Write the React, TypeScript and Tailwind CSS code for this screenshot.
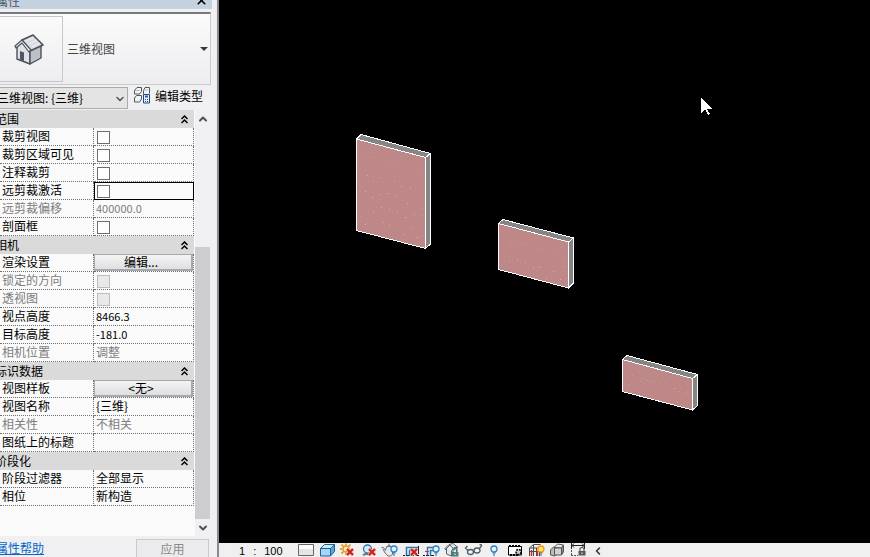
import { type ReactNode } from 'react'
import clsx from 'clsx'
import { ChevronDown, ChevronLeft, ChevronUp, X } from 'lucide-react'

type Property = {
  label: string
  value?: string
  kind: 'text' | 'check' | 'button'
  disabled?: boolean
  focused?: boolean
}

type Group = { title: string; rows: Property[] }

const groups: Group[] = [
  {
    title: '范围',
    rows: [
      { label: '裁剪视图', kind: 'check' },
      { label: '裁剪区域可见', kind: 'check' },
      { label: '注释裁剪', kind: 'check' },
      { label: '远剪裁激活', kind: 'check', focused: true },
      { label: '远剪裁偏移', kind: 'text', value: '400000.0', disabled: true },
      { label: '剖面框', kind: 'check' },
    ],
  },
  {
    title: '相机',
    rows: [
      { label: '渲染设置', kind: 'button', value: '编辑...' },
      { label: '锁定的方向', kind: 'check', disabled: true },
      { label: '透视图', kind: 'check', disabled: true },
      { label: '视点高度', kind: 'text', value: '8466.3' },
      { label: '目标高度', kind: 'text', value: '-181.0' },
      { label: '相机位置', kind: 'text', value: '调整', disabled: true },
    ],
  },
  {
    title: '标识数据',
    rows: [
      { label: '视图样板', kind: 'button', value: '<无>' },
      { label: '视图名称', kind: 'text', value: '{三维}' },
      { label: '相关性', kind: 'text', value: '不相关', disabled: true },
      { label: '图纸上的标题', kind: 'text', value: '' },
    ],
  },
  {
    title: '阶段化',
    rows: [
      { label: '阶段过滤器', kind: 'text', value: '全部显示' },
      { label: '相位', kind: 'text', value: '新构造' },
    ],
  },
]

function PropertyValue({ row }: { row: Property }) {
  if (row.kind === 'check') {
    return (
      <input
        type="checkbox"
        aria-label={row.label}
        disabled={row.disabled}
        className={clsx(
          'block mt-[3px] ml-[3px] w-[13px] h-[13px] appearance-none border',
          row.disabled ? 'border-[#bdbdbd] bg-[#e9e9e9]' : 'border-[#6e6e6e] bg-white checked:bg-[#555]',
        )}
      />
    )
  }
  if (row.kind === 'button') {
    return (
      <button
        type="button"
        aria-label={row.label}
        className="block w-full h-[17px] pr-1 leading-[14px] text-center border border-[#a5a9ae] border-r-2 border-b-2 bg-linear-to-b from-[#f4f4f4] to-[#dedfe1]"
      >
        {row.value}
      </button>
    )
  }
  return (
    <input
      type="text"
      aria-label={row.label}
      defaultValue={row.value}
      disabled={row.disabled}
      className={clsx(
        'block w-full h-4 pl-0.5 bg-transparent outline-none',
        /^[-\d]/.test(row.value ?? '') ? 'text-[11px]' : 'text-xs',
        row.disabled && 'text-[#7d7d7d]',
      )}
    />
  )
}

function PropertyGroup({ group }: { group: Group }) {
  return (
    <tbody>
      <tr className="h-[18px]">
        <th colSpan={2} className="p-0 bg-[#dadada] font-normal text-left">
          <div className="flex items-center justify-between h-[18px] pr-1.5">
            <span className="-ml-[5px] leading-4">{group.title}</span>
            <button type="button" aria-label={`收起 ${group.title}`}>
              <svg width="7" height="9" viewBox="0 0 7 9" fill="none" stroke="#000" strokeWidth="1.5">
                <path d="M.5 4 3.5 1 6.5 4M.5 8 3.5 5 6.5 8" />
              </svg>
            </button>
          </div>
        </th>
      </tr>
      {group.rows.map((row) => (
        <tr key={row.label} className="h-[18px]">
          <td
            className={clsx(
              'p-0 pl-0.5 leading-4 align-top border-r border-b border-dotted border-[#707070]',
              row.disabled && 'text-[#7d7d7d]',
            )}
          >
            {row.label}
          </td>
          <td
            className={clsx(
              'p-0 border-r border-b border-dotted border-[#707070] align-top',
              row.focused && 'outline outline-black -outline-offset-1',
            )}
          >
            <PropertyValue row={row} />
          </td>
        </tr>
      ))}
    </tbody>
  )
}

function HouseIcon() {
  return (
    <svg width="30" height="32" viewBox="0 0 30 32" strokeLinejoin="round">
      <path d="M3 13v13l13 5V17L9 8Z" fill="#dfe2e6" stroke="#4b5058" strokeWidth="1.4" />
      <path d="M16 17v14l11-6V12Z" fill="#bcc1c9" stroke="#4b5058" strokeWidth="1.4" />
      <path d="m8 7 11-5 10 10-13 6Z" fill="#dadde1" stroke="#4b5058" strokeWidth="1.6" />
      <path d="m8 7-7 6 1 2 6-5 7 9 2-2Z" fill="#f5f6f7" stroke="#4b5058" strokeWidth="1.2" />
      <path d="M6 18v8.500l4 1.500v-8.500Z" fill="#4c5565" />
      <path d="m18 14 8-4M15 11l8-4M12 8l7-3" stroke="#f2f3f5" />
    </svg>
  )
}

function EditTypeIcon() {
  return (
    <svg width="17" height="17" viewBox="0 0 17 17" fill="none" stroke="#50565e">
      <path d="M.5 3.500 3 .5h4.500v4l-2 2.500h-5ZM9.500 3.500 11 .5h4.500v6M9.500 3.500V7M.5 11l2-2.500h5V12l-2 3h-5Z" fill="#f5f5f5" />
      <path d="M1 3.500h4.500M9.500 3h4.500" stroke="#b5bac0" />
      <path d="M9.500 7.500h6v8.500h-6Z" fill="#e9f2ff" stroke="#24467c" />
      <path d="M11 9.500h3" stroke="#245ac0" strokeWidth="2" />
      <path d="M11 12.500h1m1 0h1m-3 2h1m1 0h1" stroke="#24467c" />
    </svg>
  )
}

function Cross({ x, y }: { x: number; y: number }) {
  return (
    <g transform={`translate(${x} ${y})`}>
      <path d="m-3-3 6 6m0-6-6 6" stroke="#f4b8b0" strokeWidth="3.500" />
      <path d="m-3-3 6 6m0-6-6 6" stroke="#c8201c" strokeWidth="2" />
    </g>
  )
}

function Bulb({ x, warm }: { x: number; warm?: boolean }) {
  return (
    <g transform={`translate(${x} 0)`}>
      <circle cy="6" r="3" fill={warm ? '#ffe070' : '#e4f5ff'} stroke={warm ? '#ef9a16' : '#2b83c9'} strokeWidth="1.300" />
      <path d="M-1.500 10h3M-1 12h2" stroke={warm ? '#555' : '#1c5f9e'} />
    </g>
  )
}

function Lock({ x, y, color }: { x: number; y: number; color: string }) {
  return (
    <g transform={`translate(${x} ${y})`}>
      <path d="M-2 0v-2.500q2-2 4 0V0" fill="none" stroke={color} strokeWidth="1.200" />
      <path d="M-3.500 0h7v4.500h-7Z" fill={color} />
      <path d="M0 1.500v1.500" stroke="#fff" />
    </g>
  )
}

const CropLines = () => (
  <path d="M5.500 13V4.500H17M8.500 13V7.500H15" fill="none" stroke="#2476b8" strokeWidth="1.500" />
)

const viewTools: { name: string; icon: ReactNode }[] = [
  {
    name: '详细程度',
    icon: (
      <>
        <path d="M2.500 1.500h15v11h-15Z" fill="#fff" stroke="#666" />
        <path d="M3 6h14v6H3Z" fill="#e2e6e6" />
      </>
    ),
  },
  {
    name: '视觉样式',
    icon: (
      <g stroke="#1d6096" strokeLinejoin="round">
        <path d="M3.500 5.500h10v7.500h-10Z" fill="#a5d5f3" />
        <path d="m3.500 5.500 4-4h10l-4 4Z" fill="#cdeafb" />
        <path d="m13.500 5.500 4-4v7l-4 4.500Z" fill="#5ba5d6" />
      </g>
    ),
  },
  {
    name: '日光路径',
    icon: (
      <>
        <path d="M8 .5v2M2 6h2M3.500 1.500l2 2M12.500 1.500l-2 2M3.500 10.500l2-2M8 10v2" stroke="#d98b16" strokeWidth="1.500" />
        <circle cx="8" cy="6" r="3" fill="#fff2b0" stroke="#e59a1d" strokeWidth="1.400" />
        <Cross x={12} y={9} />
      </>
    ),
  },
  {
    name: '阴影',
    icon: (
      <>
        <path d="M4 12q4-2 8 0" fill="none" stroke="#777" strokeWidth="2" />
        <circle cx="8.500" cy="6" r="4" fill="#d5ecfa" stroke="#2c76ac" strokeWidth="1.300" />
        <Cross x={13} y={9} />
      </>
    ),
  },
  {
    name: '渲染对话框',
    icon: (
      <>
        <path d="M1.500 4.500h2l2 3 1-4h6v8l-2 1.500H8L5 10 3 6M7 3.500q2-2 4 0" fill="#e6e8ea" stroke="#6b7178" />
        <path d="M9 .5v2" stroke="#6b7178" />
        <Bulb x={14} />
      </>
    ),
  },
  {
    name: '裁剪视图',
    icon: (
      <>
        <CropLines />
        <path d="M2 12.500h2m1 0h3m2 0h3m2 0h3M17.500 3v8" stroke="#222" />
        <Cross x={13} y={9} />
      </>
    ),
  },
  {
    name: '显示裁剪区域',
    icon: (
      <>
        <CropLines />
        <path d="M1 12.500h2m1 0h3m2 0h3" stroke="#222" />
        <path d="M3 8.500h4" stroke="#c8382c" />
        <Bulb x={14} />
      </>
    ),
  },
  {
    name: '锁定的三维视图',
    icon: (
      <>
        <path d="M3.500 5v6l5 2V8l2-3 3-1v5M1.500 6 6 1.500l4-1 5 4-4 2L7 2 2 7" fill="#e5e8e9" stroke="#596168" />
        <Lock x={12} y={9} color="#47837b" />
      </>
    ),
  },
  {
    name: '临时隐藏/隔离',
    icon: (
      <g fill="#edf6f8" stroke="#4f5c64" strokeWidth="1.300">
        <path d="M3.500 3 1.500 5l3 3M15.500 1.500q2.500 0 2 1.500L15 6" fill="none" />
        <ellipse cx="6.500" cy="9" rx="3" ry="2.500" />
        <ellipse cx="13" cy="7.500" rx="3" ry="2.500" />
      </g>
    ),
  },
  { name: '显示隐藏的图元', icon: <Bulb x={9} /> },
  {
    name: '临时视图属性',
    icon: (
      <>
        <path d="M2.500 3.500h13v8.500h-13Z" fill="#fff" stroke="#000" />
        <path d="M3 3h12M4 12h8" stroke="#000" strokeWidth="2" strokeDasharray="2 1" />
        <circle cx="12.500" cy="9" r="2.500" fill="#ccc" stroke="#000" strokeWidth="1.500" strokeDasharray="2 1" />
      </>
    ),
  },
  {
    name: '显示分析模型',
    icon: (
      <>
        <path d="M2.500 13V5l4-3.500h7M2.500 5h10v8M6.500 2v11M9.500 5v8M3 8.500h9" fill="none" stroke="#4a4a4a" />
        <path d="M4.500 7v6M10.500 8v5" stroke="#c83228" strokeWidth="1.500" />
        <Bulb x={14} warm />
      </>
    ),
  },
  {
    name: '高亮显示位移集',
    icon: (
      <g stroke="#555" strokeLinejoin="round">
        <path d="m2.500 7 3-3 4 1v6l-3 2-4-1Z" fill="#bbb" />
        <path d="m6.500 4 3-3 6 1-2 3-7-.5Z" fill="#e9e9e9" />
        <path d="M6.500 5h7v7h-7Z" fill="#d2d2d2" />
        <path d="m13.500 5 2-3v7l-2 3Z" fill="#888" />
      </g>
    ),
  },
  {
    name: '显示约束',
    icon: (
      <>
        <path d="M2.500 0v6M15.500 0v6M3 2.500h12M5 .5l-2 2 2 2M13 .5l2 2-2 2" fill="none" stroke="#222" />
        <path d="M2.500 7v5M2 12.500h7" stroke="#555" strokeDasharray="2 1" />
        <Lock x={13} y={8} color="#555" />
      </>
    ),
  },
]

function PropertiesPanel() {
  return (
    <aside className="flex flex-col w-[219px] shrink-0 overflow-hidden bg-[#f0f0f2] border-r-2 border-[#8a8b8d]">
      <header className="flex items-center justify-between h-[9px] mr-[5px] pr-1 bg-[#c4d2df] text-[#4b5563]">
        <h1 className="-mt-2 -ml-1 leading-4">属性</h1>
        <button type="button" aria-label="关闭" className="-mt-2 text-black">
          <X size={13} strokeWidth={3} />
        </button>
      </header>

      <button
        type="button"
        className="flex items-center mt-[3px] mr-[6px] h-[73px] shrink-0 text-left border-t-2 border-r border-b border-t-[#77797b] border-[#c9cbce] bg-linear-to-b from-[#fbfbfb] to-[#ededf0]"
      >
        <span className="flex items-center w-[63px] h-[66px] pl-3.5 border-y border-r border-[#c5c8cc]">
          <HouseIcon />
        </span>
        <span className="flex-1 pl-1 text-[#444]">三维视图</span>
        <svg width="8" height="4" viewBox="0 0 8 4" className="mr-0.5" fill="#333a44">
          <path d="M0 0h8L4 4Z" />
        </svg>
      </button>

      <div className="flex items-center h-[25px] shrink-0">
        <div className="relative w-[128px] h-[22px]">
          <select
            aria-label="视图"
            className="w-full h-full appearance-none pl-0 -indent-[3px] bg-[#e4e4e4] border-y border-r border-[#acacac]"
          >
            <option>三维视图: {'{三维}'}</option>
          </select>
          <ChevronDown
            size={12}
            strokeWidth={3}
            className="absolute right-0.5 top-1.5 pointer-events-none text-[#555]"
          />
        </div>
        <button type="button" className="flex items-center gap-1 pl-1.5 pb-1">
          <EditTypeIcon />
          编辑类型
        </button>
      </div>

      <div className="flex flex-1 min-h-0 mr-[7px]">
        <div className="flex-1 overflow-hidden bg-[#fafafa]">
          <table className="w-[194px] table-fixed border-separate border-spacing-0">
            <colgroup>
              <col className="w-[94px]" />
              <col />
            </colgroup>
            {groups.map((group) => (
              <PropertyGroup key={group.title} group={group} />
            ))}
          </table>
        </div>
        <div className="flex flex-col w-[15px] text-[#505050]">
          <button type="button" aria-label="向上滚动" className="flex items-center justify-center h-[17px]">
            <ChevronUp size={12} strokeWidth={4} />
          </button>
          <div className="flex-1" />
          <div className="h-[272px] bg-[#cdcdcf]" />
          <button type="button" aria-label="向下滚动" className="flex items-center justify-center h-[17px]">
            <ChevronDown size={12} strokeWidth={4} />
          </button>
        </div>
      </div>

      <footer className="flex items-end justify-between h-[21px] shrink-0 pr-2">
        <a href="#help" className="-ml-1 leading-[18px] text-[#0066cc] underline">
          属性帮助
        </a>
        <button
          type="button"
          disabled
          className="w-[73px] h-[18px] leading-4 border-t border-x border-[#c9cacc] bg-[#ebebed] text-[#8a8a8a]"
        >
          应用
        </button>
      </footer>
    </aside>
  )
}

type Wall = {
  front: string
  top: string
  side: string
  specks: { color: string; at: number[][] }[]
}

const walls: Wall[] = [
  {
    front: '137.5,139 206.5,157.5 206.5,248.5 137.5,230.5',
    top: '137.5,139 142,134.5 211.5,153.5 206.5,157.5',
    side: '206.5,157.5 211.5,153.5 211.5,244 206.5,248.5',
    specks: [
      {
        color: '#c99a7c',
        at: [
          [144, 154], [148, 156], [151, 157], [155, 157], [159, 158], [163, 160], [169, 161], [174, 162], [178, 164],
          [184, 165], [189, 166], [194, 168], [198, 169], [142, 158], [154, 160], [166, 162], [176, 166], [185, 168],
          [201, 172], [140, 172], [140, 178], [140, 184], [140, 190], [140, 197], [140, 203], [140, 209], [141, 216],
          [141, 221], [203, 187], [203, 194], [203, 201], [203, 208], [203, 215], [203, 222], [203, 228], [203, 235],
          [148, 178], [157, 181], [169, 179], [146, 192], [154, 198], [166, 193], [177, 196], [183, 200], [147, 207],
          [165, 206], [173, 212], [187, 217], [148, 223], [164, 221], [180, 227], [193, 229], [153, 231], [197, 237],
        ],
      },
      {
        color: '#ff9a90',
        at: [
          [148, 175], [154, 181], [160, 177], [175, 181], [191, 187], [146, 191], [153, 197], [161, 194], [169, 193],
          [176, 195], [188, 203], [154, 212], [162, 207], [170, 209], [178, 211], [195, 214], [186, 217], [146, 224],
          [163, 222], [170, 225], [191, 227], [184, 234], [198, 237], [182, 186],
        ],
      },
      {
        color: '#a08ac4',
        at: [
          [156, 178], [165, 174], [174, 180], [190, 185], [194, 188], [155, 198], [162, 193], [178, 196], [190, 205],
          [153, 210], [164, 206], [179, 212], [197, 215], [148, 224], [163, 221], [179, 233], [192, 229], [145, 183],
          [180, 177], [186, 219],
        ],
      },
    ],
  },
  {
    front: '279.5,223.5 349.5,242 349.5,288 279.5,269.5',
    top: '279.5,223.5 284,219.5 354.5,238 349.5,242',
    side: '349.5,242 354.5,238 354.5,283 349.5,288',
    specks: [
      {
        color: '#c99a7c',
        at: [
          [287, 239], [291, 240], [295, 242], [299, 243], [303, 243], [308, 244], [313, 245], [318, 248], [323, 250],
          [328, 250], [334, 252], [339, 253], [344, 256], [284, 242], [284, 250], [283, 256], [282, 264], [345, 260],
          [346, 266], [345, 271], [303, 266], [319, 266], [330, 268], [317, 270], [346, 278], [291, 244], [311, 250],
        ],
      },
      { color: '#ff9a90', at: [[290, 261], [298, 260], [306, 262], [314, 267], [320, 267], [327, 278], [334, 271], [341, 279]] },
      {
        color: '#a08ac4',
        at: [[290, 260], [297, 261], [305, 262], [313, 266], [322, 266], [337, 271], [332, 268], [341, 280], [335, 282], [291, 254], [302, 257]],
      },
    ],
  },
  {
    front: '403.5,359.5 473.5,378.5 473.5,410 403.5,391.5',
    top: '403.5,359.5 408,355.5 478.500,374.5 473.5,378.5',
    side: '473.5,378.5 478.500,374.5 478.500,405.5 473.5,410',
    specks: [
      {
        color: '#cda07f',
        at: [
          [409, 376], [413, 375], [417, 377], [423, 378], [428, 380], [432, 381], [436, 381], [440, 383], [446, 383],
          [451, 385], [456, 388], [461, 388], [467, 392], [421, 381], [424, 382], [443, 387], [454, 388], [465, 394],
          [409, 384], [407, 390], [470, 398], [460, 391],
        ],
      },
      { color: '#ff9a90', at: [[435, 399], [458, 402]] },
      { color: '#ad8ab8', at: [[422, 391], [429, 394], [437, 396], [449, 398], [456, 400], [462, 403]] },
    ],
  },
]

function Viewport() {
  return (
    <svg
      viewBox="0 0 651 543"
      preserveAspectRatio="xMinYMin slice"
      shapeRendering="crispEdges"
      className="block w-full h-full"
      role="img"
      aria-label="三维视图"
    >
      {walls.map((wall) => (
        <g key={wall.front}>
          <polygon points={wall.top} fill="#858585" stroke="#fff" />
          <polygon points={wall.side} fill="#858585" stroke="#fff" />
          <polygon points={wall.front} fill="#bf8888" stroke="#fff" />
          {wall.specks.map(({ color, at }) =>
            at.map(([x, y]) => <rect key={`${color}-${x}-${y}`} x={x} y={y} width="1" height="1" fill={color} />),
          )}
        </g>
      ))}
      <path d="M482 98v15l4-4 3 6 2-1-3-5h5Z" fill="#fff" />
    </svg>
  )
}

export default function App() {
  return (
    <div className="flex h-screen overflow-hidden bg-black text-black text-xs font-['Noto_Sans_CJK_SC',sans-serif]">
      <PropertiesPanel />
      <main className="flex flex-col flex-1 min-w-0">
        <div className="flex-1 min-h-0">
          <Viewport />
        </div>
        <footer className="flex h-[14px] shrink-0 overflow-hidden bg-[#f0f0f0]">
          <button
            type="button"
            aria-label="比例"
            className="flex items-center gap-2 w-[77px] pl-5 pt-0.5 text-[11px] leading-3 font-['Liberation_Sans',sans-serif]"
          >
            <span>1</span>
            <span>:</span>
            <span>100</span>
          </button>
          {viewTools.map((tool) => (
            <button key={tool.name} type="button" aria-label={tool.name} className="w-[21px] shrink-0">
              <svg width="21" height="14" viewBox="0 0 21 14">
                {tool.icon}
              </svg>
            </button>
          ))}
          <button type="button" aria-label="收起" className="flex items-center pl-0.5 pt-0.5 text-[#333]">
            <ChevronLeft size={12} strokeWidth={3} />
          </button>
        </footer>
      </main>
    </div>
  )
}
